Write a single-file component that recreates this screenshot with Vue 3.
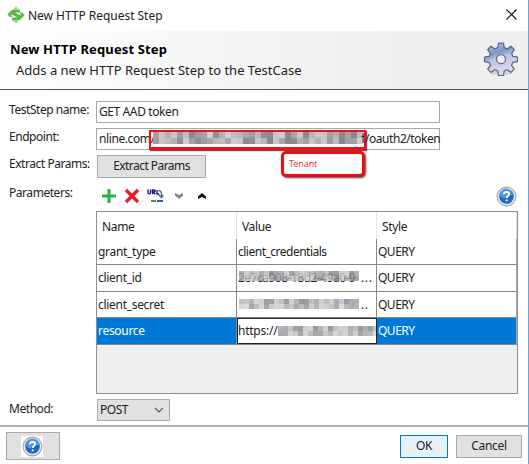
<script setup>
import { h } from 'vue'

const shades = ['#aaa6aa', '#918f96', '#bdbcc2', '#a5a3a0', '#c8c6cb', '#8e8b8d', '#b7b9b4', '#d0cdd0', '#9b9da9', '#b9b0aa', '#888890', '#c4c6ce']

const Mosaic = (props) => {
  const cells = []
  const { cols, rows, size, seed, light } = props
  for (let y = 0; y < rows; y++) {
    for (let x = 0; x < cols; x++) {
      const n = (x * 7 + y * 5 + seed * 3 + ((x * x) % 5)) % shades.length
      cells.push(h('rect', { x: x * size, y: y * size, width: size, height: size, fill: shades[n], opacity: light ? (y === rows - 1 ? 0.75 : 0.85) : 1 }))
    }
  }
  return h('svg', { width: cols * size, height: rows * size, 'shape-rendering': 'crispEdges' }, cells)
}
Mosaic.props = ['cols', 'rows', 'size', 'seed', 'light']

const HelpIcon = () =>
  h('svg', { width: 21, height: 21, viewBox: '0 0 21 21' }, [
    h('circle', { cx: 10.5, cy: 10.5, r: 9.4, fill: '#e9e9e9', stroke: '#a4a6a8', 'stroke-width': 1.1 }),
    h('circle', { cx: 10.5, cy: 10.5, r: 7.3, fill: '#1e69bd' }),
    h('path', { d: 'M3.5 9.5a7 7 0 0 1 14 0Q12 8 10 11T3.5 9.5Z', fill: '#4d98df' }),
    h('path', { d: 'M7.9 8.3Q8 6 10.6 6T13.1 8.1Q13.1 9.3 11.8 10.1Q10.7 10.8 10.7 12.1M10.7 13.6V15.3', fill: 'none', stroke: '#fff', 'stroke-width': 1.9 }),
  ])

const params = [
  { name: 'grant_type', value: 'client_credentials' },
  { name: 'client_id', value: '2e7ca908-18d2-49a0-9', tail: '...', seed: 1 },
  { name: 'client_secret', value: '', tail: '..', seed: 2 },
  { name: 'resource', value: 'https://', seed: 4, selected: true },
]
</script>

<template>
  <div class="dialog">
    <header class="titlebar">
      <svg class="logo" width="18" height="18" viewBox="0 0 18 18">
        <path d="M9 .5 12 3H6ZM6 15h6l-3 2.5Z" fill="#a7d59b" />
        <path d="M.4 8.6 4.2 4.6Q5.4 3.4 7.4 3.4H13v3H8.4q-1 .6 0 1.2L13 9.6Q14.6 10.4 13.8 12L10 11.2 5 8.4 3.9 8.6 5.6 11H3Z" fill="#5eb848" />
        <path d="m17.6 9.2-3.8 4.1q-1.2 1.2-3.2 1.2H5v-3h4.6q1-.5 0-1.1L5 8.2Q3.4 7.2 4.2 5.9L8 6.6l5 2.7 1.1-.3-1.7-2.4H15Z" fill="#5eb848" />
      </svg>
      <span class="title">New HTTP Request Step</span>
      <svg class="close" width="11" height="11" viewBox="0 0 11 11"><path d="m.5.5 10 10m0-10-10 10" stroke="#111" stroke-width="1.1" /></svg>
    </header>

    <section class="banner">
      <div class="banner-text">
        <h1>New HTTP Request Step</h1>
        <p>Adds a new HTTP Request Step to the TestCase</p>
      </div>
      <svg class="gear" width="34" height="35" viewBox="0 0 34 35">
        <defs>
          <linearGradient id="steel" x1="0" y1="0" x2=".35" y2="1">
            <stop offset="0" stop-color="#b9c7e3" /><stop offset=".38" stop-color="#7f98c4" />
            <stop offset=".55" stop-color="#b9c3e2" /><stop offset="1" stop-color="#e2daf0" />
          </linearGradient>
        </defs>
        <ellipse cx="17" cy="31" rx="11" ry="2.5" fill="#d5d5d5" />
        <path d="M14.5 1h5l.7 4.6 3 1.3L27 4.2l3.3 3.4-2.7 3.7 1.2 3 4.7.7v4.6l-4.7.8-1.2 2.9 2.7 3.8-3.3 3.3-3.8-2.7-3 1.3-.7 4.5h-5l-.7-4.5-3-1.3L7 30.4l-3.3-3.3 2.7-3.8-1.2-2.9-4.7-.8V15l4.7-.7 1.2-3-2.7-3.7L7 4.2l3.8 2.7 3-1.3Z" fill="url(#steel)" stroke="#596383" stroke-width="1.2" stroke-linejoin="round" />
        <circle cx="17" cy="17.2" r="4.5" fill="#f2f2f4" stroke="#667091" stroke-width="1.3" />
      </svg>
    </section>

    <main class="form">
      <label>TestStep name:</label>
      <div class="field">GET AAD token</div>

      <label>Endpoint:</label>
      <div class="field endpoint">
        <span>nline.com/</span>
        <span class="redacted"><Mosaic :cols="35" :rows="2" :size="6" :seed="1" /><i>f</i></span>
        <span class="path">/oauth2/token</span>
        <span class="note">Tenant</span>
      </div>

      <label>Extract Params:</label>
      <div class="extract"><button class="btn">Extract Params</button></div>

      <label>Parameters:</label>
      <div class="toolbar">
        <svg width="16" height="16" viewBox="0 0 16 16"><path d="M8 1v14M1 8h14" stroke="#27b34b" stroke-width="3" /></svg>
        <svg width="16" height="16" viewBox="0 0 16 16"><path d="m2 2 12 12M14 2 2 14" stroke="#ed1c24" stroke-width="3.4" /></svg>
        <svg class="url" width="17" height="16" viewBox="0 0 17 16">
          <path d="M1 1.5v3q0 1.2 1.3 1.2t1.3-1.2v-3M5.6 6.2V2h1.5q1.1 0 1.1 1t-1.1 1h-1l2.2 2.2M10 2v4h2" stroke="#17177f" stroke-width="1.4" fill="none" />
          <path d="M11.5 2.5q3.5 0 3 6m-2.8-2 2.7 3.2L16.4 7" fill="none" stroke="#426c6c" stroke-width="1.3" />
          <path d="M4 13h5" stroke="#148014" stroke-width="1.6" /><path d="M10 13h6" stroke="#1414ec" stroke-width="1.6" />
        </svg>
        <svg width="10" height="8" viewBox="0 0 10 8"><path d="M1 1 5 3 9 1V3.5L5 7 1 3.5Z" fill="#858585" /></svg>
        <svg width="10" height="8" viewBox="0 0 10 8"><path d="M1 7 5 5 9 7V4.5L5 1 1 4.5Z" fill="#111" /></svg>
        <HelpIcon class="help" />
      </div>

      <div class="table">
        <div class="row head"><div>Name</div><div>Value</div><div>Style</div></div>
        <div v-for="p in params" :key="p.name" class="row" :class="{ selected: p.selected }">
          <div>{{ p.name }}</div>
          <div class="value">
            <span class="text" :class="{ under: p.seed === 1 }">{{ p.value }}</span>
            <Mosaic v-if="p.seed" class="mask" :class="{ over: p.seed === 1 }" :cols="p.selected ? 20 : 24" :rows="2" :size="5" :seed="p.seed" :light="true" />
            <b v-if="p.tail">{{ p.tail }}</b>
          </div>
          <div>QUERY</div>
        </div>
      </div>

      <label class="method">Method:</label>
      <div class="select">POST
        <svg width="10" height="6" viewBox="0 0 10 6"><path d="m1 .8 4 4 4-4" fill="none" stroke="#555" stroke-width="1.2" /></svg>
      </div>
    </main>

    <footer>
      <button class="btn helpbtn"><span><HelpIcon /></span></button>
      <button class="btn ok">OK</button>
      <button class="btn cancel">Cancel</button>
    </footer>
  </div>
</template>

<style>
body { margin: 0; background: #fff; }
</style>

<style scoped>
* { box-sizing: border-box; }
svg { display: block; flex: none; }
.dialog { width: 529px; height: 464px; background: #fff; border-right: 1px solid #6ca6da; font: 12px/16px "Noto Sans", sans-serif; color: #222; overflow: hidden; white-space: nowrap; letter-spacing: -.5px; }
.titlebar { height: 31px; display: flex; align-items: center; padding: 0 11px 2px 7px; }
.title { margin-left: 3px; line-height: 16px; letter-spacing: -.03px; padding-top: 3px; }
.close { margin-left: auto; }
.banner { height: 59px; display: flex; justify-content: space-between; border-bottom: 1px solid #555; background: linear-gradient(90deg, #fff, #efefef 75%); padding: 9px 10px 0 10px; }
h1 { margin: 0; font-size: 13px; line-height: 18px; color: #000; letter-spacing: .13px; }
p { margin: 3px 0 0 6px; font-size: 13px; line-height: 18px; letter-spacing: 0; }
.gear { margin-top: 2px; }
.form { height: 335px; padding: 11px 10px 0 9px; display: grid; grid-template-columns: 87px 1fr; grid-template-rows: 22px 22px 24px 22px 183px 22px; row-gap: 5px; align-items: start; }
label { padding-top: 1px; letter-spacing: -.45px; }
.field { width: 344px; height: 22px; border: 1px solid #a6a8b1; padding: 1px 2px; line-height: 17px; letter-spacing: -.4px; }
.endpoint { display: flex; position: relative; }
.redacted { position: absolute; left: 52px; top: 1px; width: 217px; height: 20px; border: 2px solid #f01018; border-bottom-width: 3px; box-shadow: 1px 1px 1px #555; overflow: hidden; }
.redacted svg { margin: 0 0 0 2px; }
.redacted i { font-style: normal; position: absolute; right: -1px; top: 0; line-height: 14px; }
.path { position: absolute; left: 268px; top: 1px; letter-spacing: -.45px; }
.note { position: absolute; left: 184px; top: 22px; width: 84px; height: 26px; border: 3px solid #f30b10; border-radius: 5px; box-shadow: 1px 1px 2px #444; background: #fff; color: #f33; font-size: 9px; line-height: 19px; padding-left: 5px; letter-spacing: -.1px; }
.extract { padding: 0 0 0 1px; }
.btn { display: flex; align-items: center; justify-content: center; font: inherit; letter-spacing: -.3px; color: #222; margin: 0; padding: 0; border: 1px solid #aaa; background: #e1e1e1; border-radius: 0; }
.extract .btn { width: 109px; height: 23px; padding-bottom: 1px; letter-spacing: -.55px; }
.toolbar { height: 24px; display: flex; align-items: center; gap: 7px; padding: 0 1px 0 5px; }
.url { margin-right: 3px; }
.toolbar svg:nth-child(4) { margin-right: 6px; }
.help { margin-left: auto; }
.table { grid-column: 2; width: 422px; height: 183px; border: 1px solid #8b8f98; background: #efefef; }
.row { display: grid; grid-template-columns: 140px 140px 1fr; height: 26.4px; border-bottom: 1px solid #878787; background: #fff; line-height: 25px; }
.row > div { padding-left: 1px; border-right: 1px solid #878787; overflow: hidden; }
.row > div:last-child { border-right-color: #aaa; }
.row > div:first-child { letter-spacing: -.3px; }
.row.head { height: 27px; border: 0; line-height: 29px; }
.row.head > div { padding-left: 5px; border-right-color: #e5e5e5; letter-spacing: -.35px; }
.value { display: flex; position: relative; }
.text { flex: none; }
.under { position: absolute; left: 1px; top: 0; width: 120px; overflow: hidden; }
.mask { align-self: center; margin-left: 1px; }
.over { position: relative; margin-top: -4px; }
.value b { font-weight: 400; margin-left: 2px; letter-spacing: .6px; }
.row.selected { background: #0078d7; color: #fff; }
.row.selected .value { background: #fff; color: #222; border: 1px solid #222; line-height: 23px; padding-left: 0; letter-spacing: -.25px; }
.method { padding-top: 2px; }
.select { width: 73px; height: 22px; margin-left: 1px; border: 1px solid #aaa; background: #e1e1e1; display: flex; align-items: center; justify-content: space-between; padding: 0 5px 0 2px; }
footer { height: 39px; border-top: 2px solid #b0b0b0; display: flex; align-items: flex-start; padding: 5px 6px 0 6px; }
.helpbtn { width: 54px; height: 28px; margin-right: auto; }
.helpbtn span { background: #fff; padding-left: 1px; margin-right: 3px; }
.ok, .cancel { height: 23px; margin-top: 3px; padding-bottom: 1px; }
.ok { width: 48px; border-color: #0078d7; background: #e5f1fb; }
.cancel { width: 66px; margin-left: 8px; }
</style>
